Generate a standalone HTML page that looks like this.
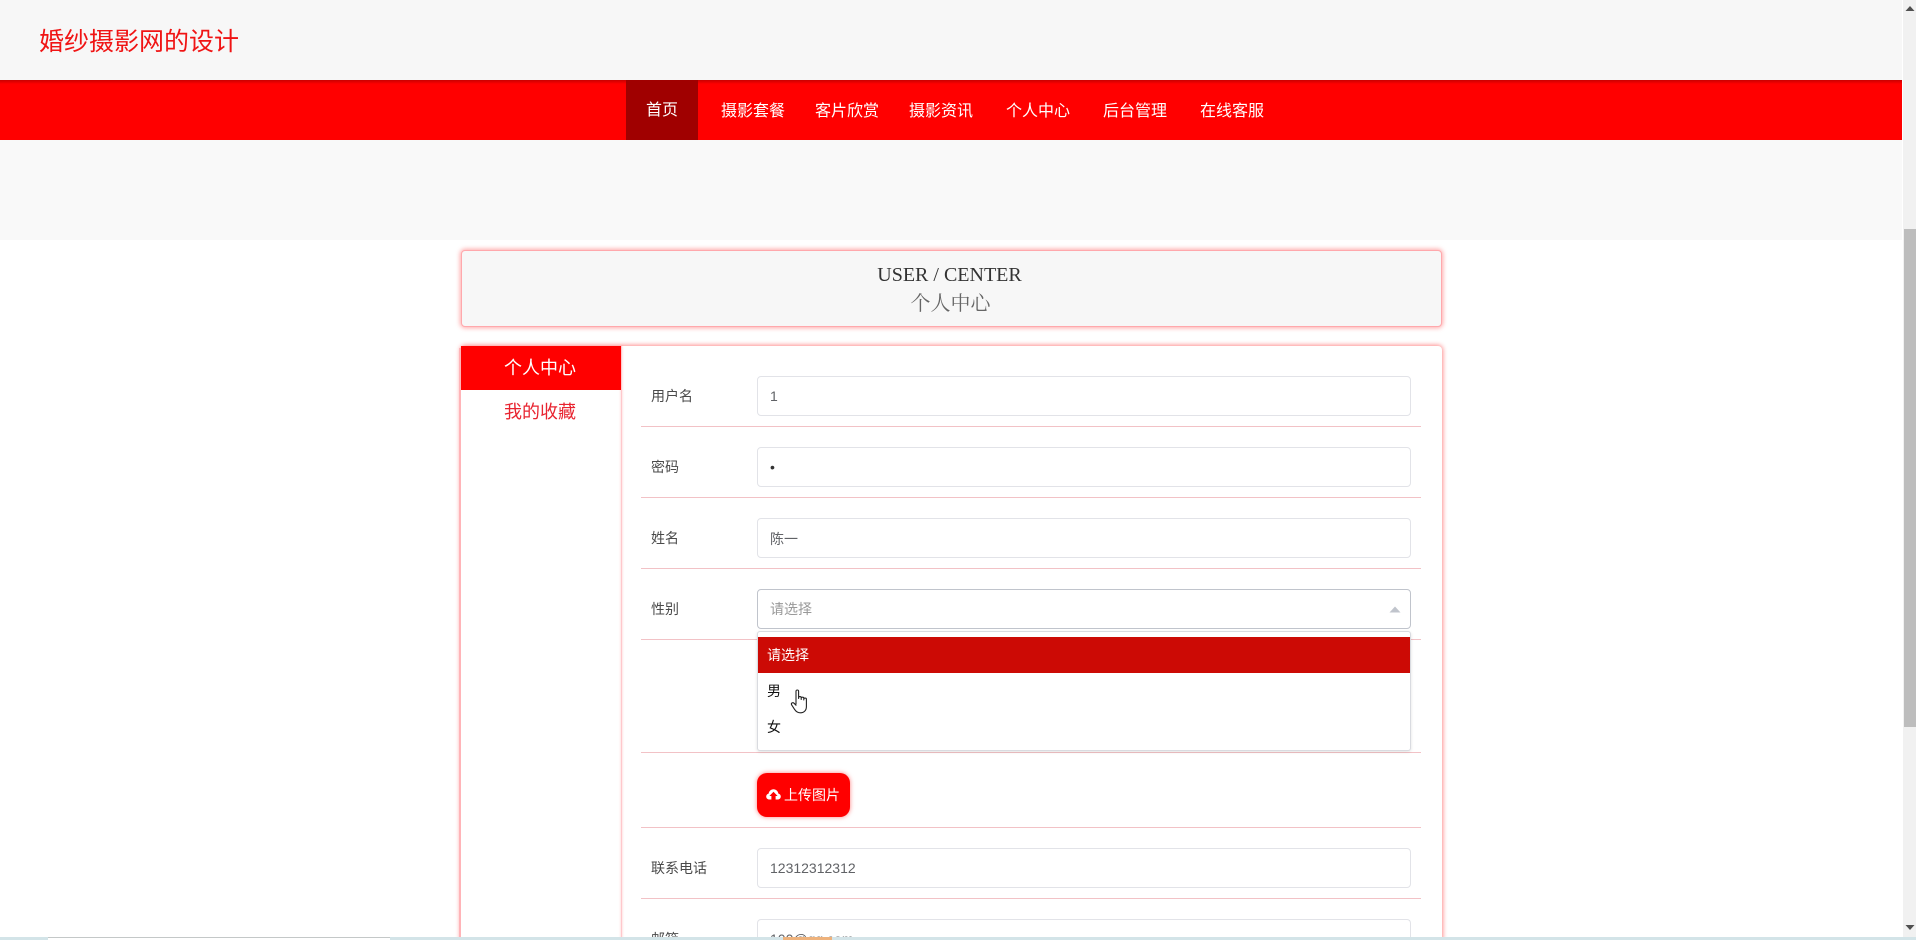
<!DOCTYPE html>
<html lang="zh-CN">
<head>
<meta charset="utf-8">
<title>婚纱摄影网的设计</title>
<style>
html,body{margin:0;padding:0;width:1916px;height:940px;overflow:hidden;background:#fff;font-family:"Liberation Sans","Noto Sans CJK SC",sans-serif;}
#w{position:absolute;left:0;top:0;width:1916px;height:940px;overflow:hidden;background:#fff;}
.a{position:absolute;box-sizing:border-box;white-space:nowrap;}
.nav{font-size:16px;line-height:22px;color:#fff;height:22px;top:101px;}
.lb{font-size:14px;line-height:20px;height:20px;left:651px;color:#4a4a4a;}
.in{left:757px;width:654px;height:40px;border:1px solid #e2e3e8;border-radius:4px;background:#fff;font-size:14px;line-height:39px;color:#606266;padding-left:12px;}
.hr{left:641px;width:780px;height:1px;background:#f2c2c6;}
</style>
</head>
<body>
<div id="w">
<div class="a" style="left:0;top:0;width:1902px;height:80px;background:#f7f7f7"></div>
<div class="a" style="left:39px;top:25px;font-size:25px;line-height:34px;color:#f01414">婚纱摄影网的设计</div>

<div class="a" style="left:0;top:80px;width:1902px;height:60px;background:linear-gradient(#c80000,#ff0000 4px)"></div>
<div class="a" style="left:626px;top:80px;width:72px;height:60px;background:#a00000"></div>
<div class="a nav" style="left:646px;top:100px">首页</div>
<div class="a nav" style="left:721px">摄影套餐</div>
<div class="a nav" style="left:815px">客片欣赏</div>
<div class="a nav" style="left:909px">摄影资讯</div>
<div class="a nav" style="left:1006px">个人中心</div>
<div class="a nav" style="left:1103px">后台管理</div>
<div class="a nav" style="left:1200px">在线客服</div>

<div class="a" style="left:0;top:140px;width:1902px;height:100px;background:#f9f9f9"></div>

<!-- title box -->
<div class="a" style="left:461px;top:250px;width:981px;height:77px;background:#f7f7f7;border:1px solid #ffa8ac;border-radius:4px;box-shadow:0 0 5px 1px rgba(255,0,0,.35)"></div>
<div class="a" style="left:459px;width:981px;top:263px;text-align:center;font-family:'Liberation Serif','Noto Serif CJK SC',serif;font-size:20px;line-height:24px;color:#333">USER / CENTER</div>
<div class="a" style="left:460px;width:981px;top:291px;text-align:center;font-family:'Liberation Serif','Noto Serif CJK SC',serif;font-size:20px;line-height:26px;color:#666">个人中心</div>

<!-- main panel -->
<div class="a" style="left:461px;top:346px;width:981px;height:594px;background:#fff;border-radius:4px 4px 0 0;box-shadow:0 0 5px 1px rgba(255,0,0,.45)"></div>
<div class="a" style="left:459px;top:348px;width:2px;height:592px;background:#ffb4b8"></div>
<div class="a" style="left:621px;top:346px;width:1px;height:594px;background:#ffc8cc;box-shadow:0 0 2px rgba(255,0,0,.3)"></div>
<div class="a" style="left:461px;top:346px;width:160px;height:44px;background:#f00;color:#fff;font-size:18px;line-height:44px;text-align:center;padding-right:2px">个人中心</div>
<div class="a" style="left:461px;top:390px;width:160px;height:44px;color:#e8232f;font-size:18px;line-height:44px;text-align:center;padding-right:2px">我的收藏</div>

<div class="a lb" style="top:386px">用户名</div>
<div class="a in" style="top:376px">1</div>
<div class="a hr" style="top:426px"></div>

<div class="a lb" style="top:457px">密码</div>
<div class="a in" style="top:447px;color:#333">•</div>
<div class="a hr" style="top:497px"></div>

<div class="a lb" style="top:528px">姓名</div>
<div class="a in" style="top:518px;line-height:41px">陈一</div>
<div class="a hr" style="top:568px"></div>

<div class="a lb" style="top:599px">性别</div>
<div class="a in" style="top:589px;border-color:#c0c4cc;color:#999">请选择</div>
<svg class="a" style="left:1389px;top:606px" width="12" height="7" viewBox="0 0 12 7"><path d="M0.5 6.5L6 0.5L11.5 6.5Z" fill="#c0c4cc"/></svg>
<div class="a hr" style="top:639px"></div>
<div class="a hr" style="top:752px"></div>

<!-- dropdown -->
<div class="a" style="left:757px;top:631px;width:654px;height:120px;background:#fff;border:1px solid #d9dbe0;border-radius:3px;box-shadow:0 1px 3px rgba(0,0,0,.12)"></div>
<div class="a" style="left:758px;top:637px;width:652px;height:36px;background:#cc0a05;color:#fff;font-size:14px;line-height:36px;padding-left:9px">请选择</div>
<div class="a" style="left:767px;top:673px;font-size:14px;line-height:36px;color:#111">男</div>
<div class="a" style="left:767px;top:709px;font-size:14px;line-height:36px;color:#111">女</div>

<!-- hand cursor -->
<svg class="a" style="left:790px;top:688px" width="21" height="26" viewBox="0 0 21 26">
<path d="M6 16V3.2C6 1.6 8.6 1.6 8.6 3.2V10.5M8.6 9.6C8.6 8.2 11.2 8.2 11.2 9.6V11.5M11.2 10.2C11.2 8.9 13.8 8.9 13.8 10.2V12M13.8 11C13.8 9.8 16.4 9.8 16.4 11V18.5C16.4 22.5 14 24.8 10.5 24.8C7.5 24.8 6 23.5 4.6 21.4L1.6 16.8C0.8 15.4 2.6 13.9 4 15.2L6 17.2" fill="#fff" stroke="#222" stroke-width="1.1" stroke-linejoin="round" stroke-linecap="round"/>
</svg>

<!-- upload button -->
<div class="a" style="left:757px;top:773px;width:93px;height:44px;background:#f00;border-radius:10px;box-shadow:0 0 5px rgba(255,0,0,.5)"></div>
<svg class="a" style="left:766px;top:788px" width="15" height="13" viewBox="0 0 15 13"><path d="M3.4 11.5C1.5 11.5 0.2 10.2 0.2 8.5C0.2 7 1.2 5.9 2.6 5.6C3 3 5 1.2 7.5 1.2C10 1.2 12 3 12.4 5.6C13.8 5.9 14.8 7 14.8 8.5C14.8 10.2 13.5 11.5 11.6 11.5H9.6V8H11.6L7.5 3.8L3.4 8H5.4V11.5Z" fill="#fff"/></svg>
<div class="a" style="left:784px;top:785px;font-size:14px;line-height:20px;color:#fff">上传图片</div>
<div class="a hr" style="top:827px"></div>

<div class="a lb" style="top:858px">联系电话</div>
<div class="a in" style="top:848px">12312312312</div>
<div class="a hr" style="top:898px"></div>

<div class="a lb" style="top:929px;height:8px;overflow:hidden">邮箱</div>
<div class="a in" style="top:919px;height:18px;border-bottom:0;border-radius:4px 4px 0 0;overflow:hidden">100@qq.com</div>

<!-- scrollbar -->
<div class="a" style="left:1903px;top:0;width:13px;height:940px;background:#f1f1f1"></div>
<div class="a" style="left:1904px;top:229px;width:12px;height:498px;background:#bdbdbd"></div>
<svg class="a" style="left:1905px;top:5px" width="10" height="7"><path d="M0.5 6L5 1L9.5 6Z" fill="#505050"/></svg>
<svg class="a" style="left:1905px;top:924px" width="10" height="7"><path d="M0.5 1L5 6L9.5 1Z" fill="#505050"/></svg>

<!-- bottom strip -->
<div class="a" style="left:0;top:937px;width:1916px;height:3px;background:#d3e4e8"></div>
<div class="a" style="left:48px;top:937px;width:342px;height:3px;background:#fff;border-top:1px solid #c4c8c8"></div>
<div class="a" style="left:783px;top:937px;width:49px;height:3px;background:#eeb27c"></div>
</div>
</body>
</html>
